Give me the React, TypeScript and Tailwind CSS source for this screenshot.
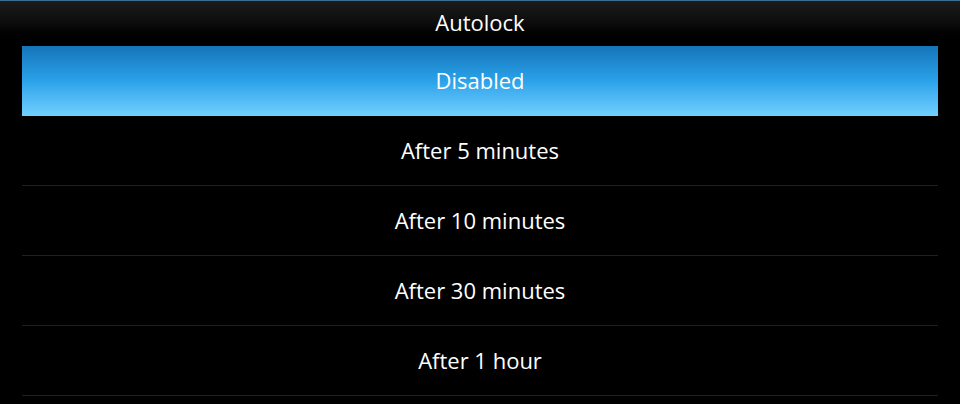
const options = ["Disabled", "After 5 minutes", "After 10 minutes", "After 30 minutes", "After 1 hour"];

export default function App() {
  const selected = 0;
  return (
    <div className="w-[960px] h-[404px] bg-black overflow-hidden font-['Open_Sans',sans-serif] text-white">
      <div className="h-[46px] pb-[4px] border-t border-[#3d6f8f] bg-gradient-to-b from-[#1c1c1c] via-[#0c0c0c] to-black flex items-center justify-center">
        <span className="text-[22px] leading-none">Autolock</span>
      </div>
      <div className="mx-[22px]">
        {options.map((label, i) => (
          <div
            key={label}
            className={
              i === selected
                ? "h-[70px] pb-[2px] flex items-center justify-center bg-gradient-to-b from-[#1675b8] via-[#2aa2ea] to-[#70d0ff]"
                : "h-[70px] pb-[2px] flex items-center justify-center border-b border-[#132431]"
            }
          >
            <span className="text-[22px] leading-none">{label}</span>
          </div>
        ))}
      </div>
    </div>
  );
}
